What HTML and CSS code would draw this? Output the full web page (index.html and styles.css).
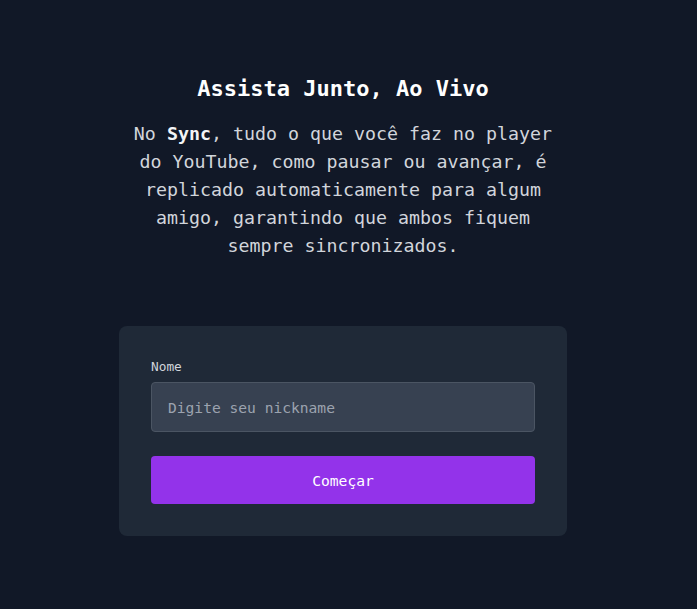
FILE: index.html
```html
<!DOCTYPE html>
<html lang="pt-BR">
<head>
<meta charset="utf-8">
<title>Sync</title>
<link rel="stylesheet" href="styles.css">
</head>
<body>
<main class="page">
  <section class="intro">
    <h1 class="title">Assista Junto, Ao Vivo</h1>
    <p class="lead">No <strong>Sync</strong>, tudo o que você faz no player do YouTube, como pausar ou avançar, é replicado automaticamente para algum amigo, garantindo que ambos fiquem sempre sincronizados.</p>
  </section>
  <form class="card">
    <label class="label" for="nick">Nome</label>
    <input class="input" id="nick" type="text" placeholder="Digite seu nickname">
    <button class="button" type="button">Começar</button>
  </form>
</main>
</body>
</html>
```

FILE: styles.css
```css
* { box-sizing: border-box; }
html, body { margin: 0; padding: 0; }
body {
  background: #111827;
  font-family: "DejaVu Sans Mono", "Liberation Mono", monospace;
  color: #d1d5db;
}
.page {
  min-height: 100vh;
  display: flex;
  flex-direction: column;
  align-items: center;
  justify-content: center;
  padding: 0 11px 0 0;
}
.intro {
  max-width: 448px;
  text-align: center;
  margin-bottom: 66px;
}
.title {
  margin: 0 0 15px;
  font-size: 22px;
  line-height: 32px;
  font-weight: bold;
  color: #ffffff;
}
.lead {
  margin: 0;
  font-size: 18.3px;
  line-height: 28px;
  color: #d1d5db;
}
.lead strong { color: #f3f4f6; }
.card {
  width: 448px;
  background: #1f2937;
  border-radius: 8px;
  padding: 32px;
  display: flex;
  flex-direction: column;
}
.label {
  font-size: 12.8px;
  line-height: 18px;
  color: #d1d5db;
  margin-bottom: 6px;
}
.input {
  height: 50px;
  background: #374151;
  border: 1px solid #4b5563;
  border-radius: 4px;
  padding: 0 16px;
  font-family: inherit;
  font-size: 14.6px;
  color: #fff;
  margin-bottom: 24px;
  outline: none;
}
.input::placeholder { color: #9ca3af; }
.button {
  height: 48px;
  background: #9333ea;
  border: none;
  border-radius: 4px;
  color: #ffffff;
  font-family: inherit;
  font-size: 14.6px;
  cursor: pointer;
}
```
